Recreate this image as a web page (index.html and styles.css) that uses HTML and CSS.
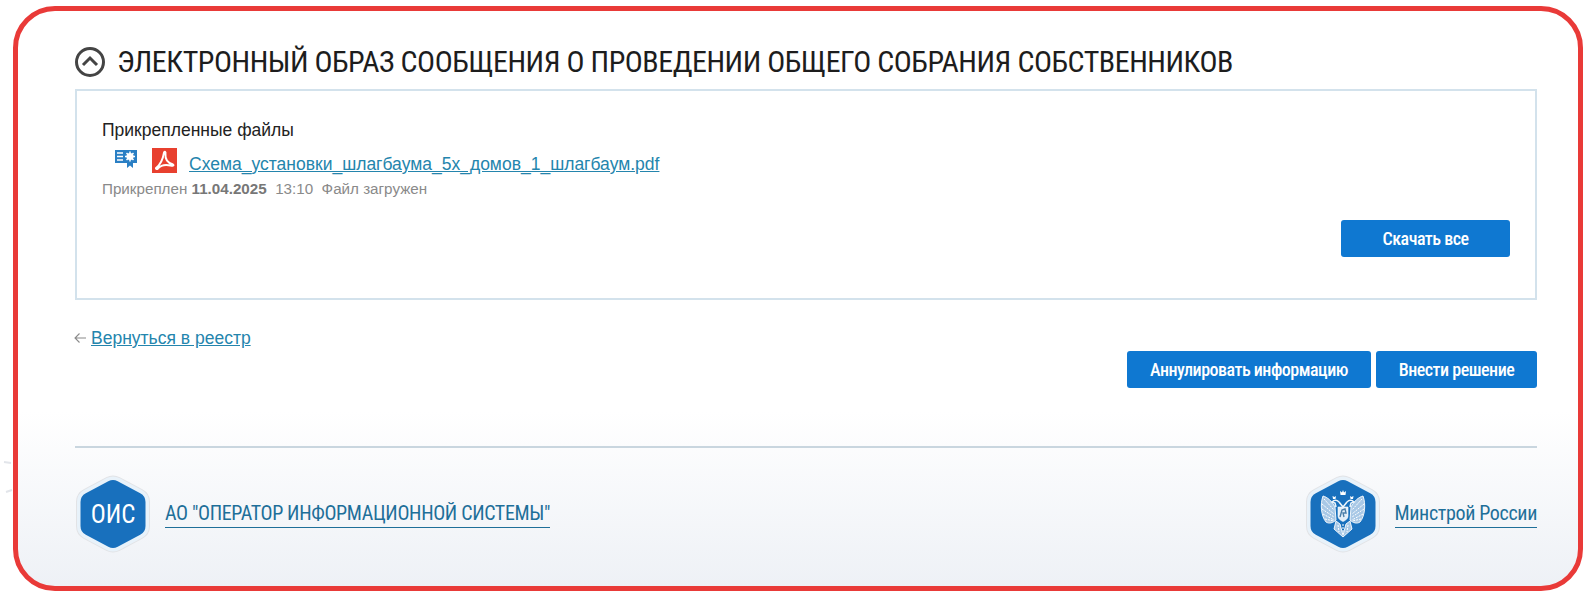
FILE: index.html
```html
<!DOCTYPE html>
<html lang="ru">
<head>
    <meta charset="UTF-8">
    <title>Электронный образ сообщения</title>
    <link rel="stylesheet" href="styles.css">
</head>
<body>
    <!-- faint pattern left over around the frame -->
    <svg class="ticks" viewBox="0 0 1588 601" width="1588" height="601">
        <path d="M4 462 L11 463 M6 492 L12 490 M925 594 L929 598 M1524 593 L1526 598"/>
    </svg>

    <div class="frame">
        <div class="title-row">
            <svg class="toggle" viewBox="0 0 30 30" width="30" height="30">
                <circle cx="15" cy="15" r="13.500" fill="none" stroke="#444" stroke-width="3"/>
                <path d="M8 18 L15 11 L22 18" fill="none" stroke="#444" stroke-width="3"/>
            </svg>
            <h1 class="title">ЭЛЕКТРОННЫЙ ОБРАЗ СООБЩЕНИЯ О ПРОВЕДЕНИИ ОБЩЕГО СОБРАНИЯ СОБСТВЕННИКОВ</h1>
        </div>

        <div class="files-box">
            <div class="files-label">Прикрепленные файлы</div>
            <div class="file-row">
                <svg class="cert-icon" viewBox="0 0 22 20" width="22" height="20">
                    <path d="M0 1 H22 V14 H18 V19 L15 16.500 L12 19 V14 H0 Z" fill="#2a7fc4"/>
                    <path d="M2 4 H8 M2 7.500 H8 M2 11 H8" stroke="#fff" stroke-width="1.600"/>
                    <circle cx="15" cy="7.500" r="3.600" fill="#fff"/>
                    <path d="M15 2.500 V12.500 M10 7.500 H20 M11.500 4 L18.500 11 M18.500 4 L11.500 11" stroke="#fff" stroke-width="1.500"/>
                </svg>
                <svg class="pdf-icon" viewBox="0 0 25 25" width="25" height="25">
                    <rect width="25" height="25" fill="#e8402f"/>
                    <path d="M4 20 C8 17 11 11 12 4.500 C12.500 3 14 3.500 13.500 6 C13 11 16 15 21 16.500 C22.500 17.500 20.500 18 18.500 17.500 C14 16.500 9 17 6 20.500 C5 21.500 3.500 21 4 20 Z" fill="none" stroke="#fff" stroke-width="1.900"/>
                </svg>
                <a class="file-link" href="#">Схема_установки_шлагбаума_5х_домов_1_шлагбаум.pdf</a>
            </div>
            <div class="file-meta">Прикреплен <b>11.04.2025</b>&nbsp; 13:10 &nbsp;Файл загружен</div>
            <div class="box-actions">
                <a class="btn btn-all" href="#">Скачать все</a>
            </div>
        </div>

        <div class="actions-row">
            <div class="back">
                <svg class="back-arrow" viewBox="0 0 12 10" width="12" height="10">
                    <path d="M12 5 H1 M5.500 .5 L1 5 L5.500 9.500" fill="none" stroke="#8a8a8a" stroke-width="1.100"/>
                </svg>
                <a href="#">Вернуться в реестр</a>
            </div>
            <div class="actions">
                <a class="btn btn-cancel" href="#">Аннулировать информацию</a>
                <a class="btn btn-decide" href="#">Внести решение</a>
            </div>
        </div>

        <div class="footer">
            <div class="org">
                <svg class="hex" viewBox="0 0 76 80" width="76" height="80">
                    <polygon class="hex-edge" points="38,16 60.500,28 60.500,52 38,64 15.500,52 15.500,28"/>
                    <polygon class="hex-ring" points="38,16 60.500,28 60.500,52 38,64 15.500,52 15.500,28"/>
                    <polygon class="hex-fill" points="38,16 60.500,28 60.500,52 38,64 15.500,52 15.500,28"/>
                    <text class="hex-text" x="38" y="49" text-anchor="middle">ОИС</text>
                </svg>
                <a class="org-link" href="#">АО "ОПЕРАТОР ИНФОРМАЦИОННОЙ СИСТЕМЫ"</a>
            </div>
            <div class="org">
                <svg class="hex" viewBox="0 0 76 80" width="76" height="80">
                    <polygon class="hex-edge" points="38,16 60.500,28 60.500,52 38,64 15.500,52 15.500,28"/>
                    <polygon class="hex-ring" points="38,16 60.500,28 60.500,52 38,64 15.500,52 15.500,28"/>
                    <polygon class="hex-fill" points="38,16 60.500,28 60.500,52 38,64 15.500,52 15.500,28"/>
                    <!-- eagle -->
                    <g class="eagle">
                        <path class="eagle-mass" d="M30 33 C27 27 22 23 18 22 C15 30 16 42 21 48 C24 50 28 49 31 46 Z"/>
                        <path class="eagle-mass" d="M46 33 C49 27 54 23 58 22 C61 30 60 42 55 48 C52 50 48 49 45 46 Z"/>
                        <path class="eagle-mass" d="M31 47 L35 50 L38 61 L41 50 L45 47 L47 55 L38 63 L29 55 Z"/>
                        <path class="eagle-feather" d="M19 25 L29 36 M17 30 L29 40 M17 35 L29 43 M18 40 L29 46 M20 45 L29 47"/>
                        <path class="eagle-feather" d="M57 25 L47 36 M59 30 L47 40 M59 35 L47 43 M58 40 L47 46 M56 45 L47 47"/>
                        <path class="eagle-feather" d="M33 51 L34 58 M38 50 V60 M43 51 L42 58"/>
                        <path class="eagle-line" d="M34 28 C31 25 29 26 27 28 L30 29 L31 33 M42 28 C45 25 47 26 49 28 L46 29 L45 33"/>
                        <path class="eagle-line" d="M34 28 L38 33 L42 28"/>
                        <path class="eagle-crown" d="M35.500 21 L35 17 L37 18.500 L38 16 L39 18.500 L41 17 L40.500 21 Z"/>
                        <path class="eagle-crown" d="M28 25 L27.500 22 L29.500 23 L31 22 L30.500 25 Z"/>
                        <path class="eagle-crown" d="M48 25 L48.500 22 L46.500 23 L45 22 L45.500 25 Z"/>
                        <path class="eagle-shield" d="M33 33 H43 V42 C43 45 40 46.500 38 47.500 C36 46.500 33 45 33 42 Z"/>
                        <path class="eagle-dark" d="M35 43 L37 36 L40 35 L41 39 L38 39 L39 43"/>
                    </g>
                </svg>
                <a class="org-link" href="#">Минстрой России</a>
            </div>
        </div>
    </div>
</body>
</html>
```

FILE: styles.css
```css
body {
    position: relative;
    margin: 0;
    background-color: #fff;
    font-family: "Liberation Sans", Arial, sans-serif;
    color: #222;
}

a {
    color: #2485ad;
}

.ticks {
    position: absolute;
    top: 0;
    left: 0;
    pointer-events: none;
}

.ticks path {
    fill: none;
    stroke: #e2e5ea;
    stroke-width: 2;
}

.frame {
    position: relative;
    box-sizing: border-box;
    height: 585px;
    margin: 6px 5px 0 13px;
    padding: 36px 41px 0 57px;
    border: 5px solid #e93a38;
    border-radius: 42px;
    background: linear-gradient(to bottom, #fff 0, #fff 400px, #eef1f6 100%);
}

.title-row {
    display: flex;
    align-items: center;
    gap: 12px;
    height: 30px;
    margin-bottom: 12px;
}

.toggle {
    flex: none;
}

.title {
    margin: 0;
    font-family: "Roboto Condensed", Roboto, sans-serif;
    font-size: 30px;
    font-weight: 400;
    line-height: 30px;
    letter-spacing: -.47px;
    white-space: nowrap;
    color: #1d1d1d;
}

.files-box {
    box-sizing: border-box;
    height: 211px;
    padding: 29px 25px 0;
    border: 2px solid #d3e2ec;
}

.files-label {
    font-size: 17.500px;
    line-height: 20px;
}

.file-row {
    display: flex;
    align-items: flex-end;
    height: 35px;
    padding-left: 13px;
}

.cert-icon {
    margin-bottom: 6px;
}

.pdf-icon {
    margin: 0 12px 2px 15px;
}

.file-link {
    font-size: 17.500px;
    line-height: 22px;
}

.file-meta {
    margin-top: 5px;
    font-size: 15.200px;
    line-height: 18px;
    color: #8a8a8a;
}

.file-meta b {
    color: #777;
}

.box-actions {
    display: flex;
    justify-content: flex-end;
    margin-top: 22px;
}

.btn {
    display: flex;
    align-items: center;
    justify-content: center;
    box-sizing: border-box;
    height: 37px;
    border-radius: 3px;
    background-color: #0f78d1;
    color: #fff;
    font-family: "Roboto Condensed", Roboto, sans-serif;
    font-size: 18px;
    font-weight: 500;
    letter-spacing: -.5px;
    text-decoration: none;
}

.btn-all {
    width: 169px;
}

.btn-cancel {
    width: 244px;
}

.btn-decide {
    width: 161px;
}

.actions-row {
    display: flex;
    justify-content: space-between;
    height: 118px;
    padding-top: 28px;
}

.back {
    display: flex;
    align-items: center;
    gap: 5px;
    height: 20px;
    font-size: 17.500px;
    line-height: 20px;
}

.back-arrow {
    margin-left: -1px;
}

.actions {
    display: flex;
    gap: 5px;
    margin-top: 23px;
}

.footer {
    display: flex;
    justify-content: space-between;
    align-items: center;
    padding-top: 26px;
    border-top: 2px solid #c9d6df;
}

.org {
    display: flex;
    align-items: center;
    gap: 14px;
}

.hex-edge {
    fill: #e2e3e6;
    stroke: #e2e3e6;
    stroke-width: 29;
    stroke-linejoin: round;
}

.hex-ring {
    fill: #e8f2fa;
    stroke: #e8f2fa;
    stroke-width: 27;
    stroke-linejoin: round;
}

.hex-fill {
    fill: #1870bd;
    stroke: #1870bd;
    stroke-width: 20;
    stroke-linejoin: round;
}

.hex-text {
    font-family: "Roboto Condensed", Roboto, sans-serif;
    font-size: 25px;
    fill: #fff;
}

.eagle-mass {
    fill: #a8c8e6;
    stroke: #fff;
    stroke-width: .9;
}

.eagle-feather {
    fill: none;
    stroke: #fff;
    stroke-width: 1;
    stroke-dasharray: 2 1;
}

.eagle-line {
    fill: none;
    stroke: #eef5fb;
    stroke-width: 1.600;
}

.eagle-crown {
    fill: #fff;
}

.eagle-shield {
    fill: #e4eef8;
    stroke: #fff;
    stroke-width: .6;
}

.eagle-dark {
    fill: none;
    stroke: #4c7ea8;
    stroke-width: 1.400;
}

.org-link {
    padding-bottom: 2px;
    border-bottom: 1.500px solid #1e6f99;
    font-family: "Roboto Condensed", Roboto, sans-serif;
    font-size: 20px;
    letter-spacing: -.35px;
    color: #1e6f99;
    text-decoration: none;
}
```
